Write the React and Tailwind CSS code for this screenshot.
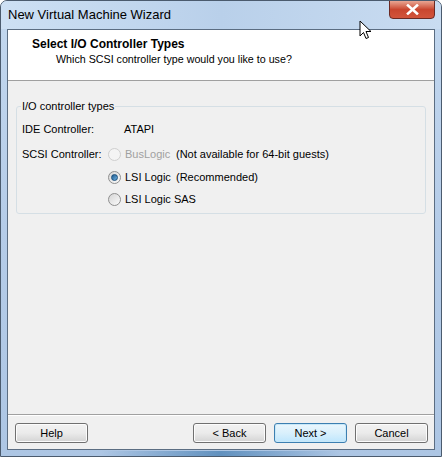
import React from 'react';

const ui = { fontFamily: '"Liberation Sans", Arial, sans-serif' };

function Radio({ checked, disabled }) {
  if (disabled) {
    return <span className="w-[13px] h-[13px] rounded-full border border-[#cfcfcf] bg-[#f4f4f4] shrink-0" />;
  }
  return (
    <span className="w-[13px] h-[13px] rounded-full border border-[#8f8f8f] bg-gradient-to-br from-[#d6d6d6] to-[#fbfbfb] flex items-center justify-center shrink-0">
      {checked && <span className="w-[7px] h-[7px] rounded-full bg-gradient-to-br from-[#1d5a8d] to-[#6fb3e4] border border-[#194f7c]" />}
    </span>
  );
}

function Button({ children, primary }) {
  return (
    <button
      className={
        'w-[73px] h-[20px] rounded-[3px] border text-[11px] text-black leading-none ' +
        (primary
          ? 'border-[#3c7fb1] bg-gradient-to-b from-[#eaf6fd] via-[#d9f0fc] to-[#bee6fd] shadow-[inset_0_0_0_1px_#c8e8f8]'
          : 'border-[#707070] bg-gradient-to-b from-[#f2f2f2] via-[#ebebeb] to-[#d4d4d4] shadow-[inset_0_0_0_1px_#fcfcfc]')
      }
      style={ui}
    >
      {children}
    </button>
  );
}

function Cursor() {
  return (
    <svg className="absolute left-[358px] top-[19px]" width="14" height="20" viewBox="0 0 14 20">
      <path d="M1 1 L1 16 L4.5 12.5 L7 18.5 L9.5 17.5 L7 11.5 L12 11.5 Z" fill="#fff" stroke="#000" strokeWidth="1" strokeLinejoin="round" />
    </svg>
  );
}

export default function App() {
  return (
    <div className="relative w-[442px] h-[457px] overflow-hidden rounded-t-[7px] border border-[#4b5b6e] bg-gradient-to-b from-[#c3d8ef] via-[#b5cce8] to-[#adc6e4] flex flex-col" style={ui}>
      {/* title bar */}
      <div className="h-[28px] flex items-start justify-between shrink-0 bg-gradient-to-r from-[#cde0f4] via-[#b9d0ea] to-[#c9dcf1]">
        <span className="pl-[7px] pt-[4px] text-[13px] text-black">New Virtual Machine Wizard</span>
        <div className="mr-[6px] w-[46px] h-[19px] -mt-px rounded-b-[4px] border border-[#6b2a24] bg-gradient-to-b from-[#e8a593] via-[#c9462f] to-[#d2543c] flex items-center justify-center">
          <svg width="13" height="11" viewBox="0 0 13 11">
            <path d="M2 1.5 L11 9.5 M11 1.5 L2 9.5" stroke="#fff" strokeWidth="2.6" strokeLinecap="square" />
          </svg>
        </div>
      </div>

      {/* client area */}
      <div className="mx-[6px] h-[421px] border border-[#5b6d82] bg-[#f0f0f0] flex flex-col text-[11px] text-black">
        <div className="h-[51px] bg-white border-b border-[#a0a0a0] pl-[24px] pt-[7px] shrink-0">
          <div className="font-bold text-[12px] leading-[14px]">Select I/O Controller Types</div>
          <div className="pl-[24px] pt-[1px] leading-[14px] text-[10.7px]">Which SCSI controller type would you like to use?</div>
        </div>

        <div className="flex-1 px-[8px] pt-[19px]">
          <fieldset className="border border-[#d5dfe5] rounded-[3px] px-[5px] pb-[7px]">
            <legend className="px-[1px] -ml-[1px] leading-[13px]">I/O controller types</legend>
            <div className="flex flex-col pt-[9px]">
              <div className="h-[14px] flex items-center">
                <span className="w-[102px]">IDE Controller:</span>
                <span>ATAPI</span>
              </div>

              <div className="mt-[11px] h-[14px] flex items-center">
                <span className="w-[86px]">SCSI Controller:</span>
                <Radio disabled />
                <span className="ml-[4px] w-[51px] text-[#a0a0a0]">BusLogic</span>
                <span>(Not available for 64-bit guests)</span>
              </div>

              <div className="mt-[9px] h-[14px] flex items-center pl-[86px]">
                <Radio checked />
                <span className="ml-[4px] w-[51px]">LSI Logic</span>
                <span>(Recommended)</span>
              </div>

              <div className="mt-[8px] h-[14px] flex items-center pl-[86px]">
                <Radio />
                <span className="ml-[4px]">LSI Logic SAS</span>
              </div>
            </div>
          </fieldset>
        </div>

        <div className="h-[35px] border-t border-[#a0a0a0] shadow-[inset_0_1px_0_#ffffff] flex items-start pt-[8px] pl-[7px] pr-[6px] shrink-0">
          <Button>Help</Button>
          <div className="flex-1" />
          <div className="flex gap-[8px]">
            <Button>&lt; Back</Button>
            <Button primary>Next &gt;</Button>
            <Button>Cancel</Button>
          </div>
        </div>
      </div>

      <div className="flex-1 mx-[100px] mt-[1px] h-[3px] bg-gradient-to-r from-transparent via-[#2f6ea6] to-transparent opacity-60" />

      <Cursor />
    </div>
  );
}
